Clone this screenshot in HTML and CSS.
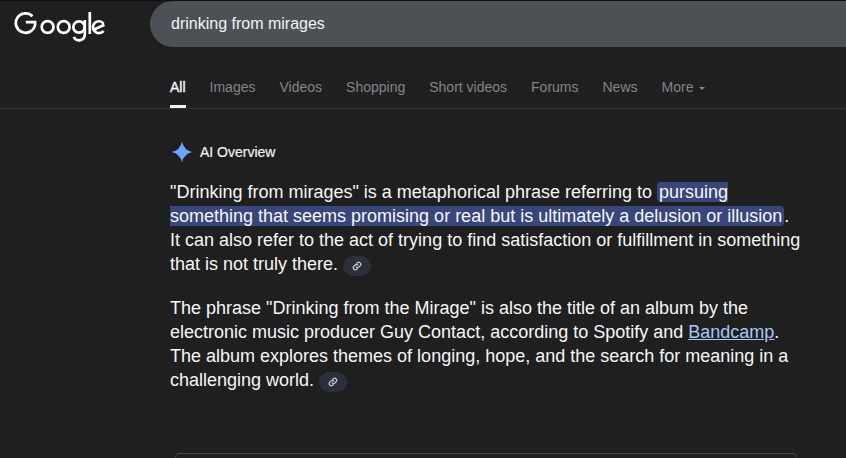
FILE: index.html
```html
<!DOCTYPE html>
<html lang="en">
<head>
<meta charset="utf-8">
<title>drinking from mirages - Google Search</title>
<link rel="stylesheet" href="styles.css">
</head>
<body>
<header class="top">
  <svg class="logo" width="92" height="36" viewBox="0 0 92 36" role="img" aria-label="Google">
    <g fill="none" stroke="#fff" stroke-width="2.7">
      <path d="M18.400 9.200A9.700 9.700 0 1 0 21.100 17.600V15.100H11.800"/>
      <circle cx="33.600" cy="20" r="5.900"/>
      <circle cx="49.700" cy="20" r="5.900"/>
      <circle cx="65" cy="20" r="5.700"/>
      <path d="M70.800 13V27.400A5.800 5.800 0 0 1 59.800 30"/>
      <path d="M75.800 5V27"/>
      <path d="M89.600 16.600A5.900 5.900 0 1 0 89.500 23.800M79.800 22.800L90.400 17.800"/>
    </g>
  </svg>
  <div class="search">drinking from mirages</div>
</header>
<nav class="tabs">
  <a class="tab active">All</a>
  <a class="tab">Images</a>
  <a class="tab">Videos</a>
  <a class="tab">Shopping</a>
  <a class="tab">Short videos</a>
  <a class="tab">Forums</a>
  <a class="tab">News</a>
  <a class="tab">More <span class="caret"></span></a>
</nav>
<main class="content">
  <div class="ai-head">
    <svg class="spark" width="24" height="26" viewBox="0 0 24 26" aria-hidden="true">
      <path fill="#6ba4fb" d="M12 2.500Q13.800 11.300 22.500 13 13.800 14.700 12 23.500 10.200 14.700 1.500 13 10.200 11.300 12 2.500Z"/>
    </svg>
    <span class="ai-title">AI Overview</span>
  </div>
  <p class="para">"Drinking from mirages" is a metaphorical phrase referring to <mark class="hl">pursuing something that seems promising or real but is ultimately a delusion or illusion</mark>. It can also refer to the act of trying to find satisfaction or fulfillment in something that is not truly there. <span class="chip"><svg width="10" height="10" viewBox="0 0 24 24" fill="none" stroke="#c8cace" stroke-width="3" stroke-linecap="round"><path d="M10 14a5 5 0 0 0 7 0l3-3a5 5 0 0 0-7-7l-1.500 1.500"/><path d="M14 10a5 5 0 0 0-7 0l-3 3a5 5 0 0 0 7 7l1.500-1.500"/></svg></span></p>
  <p class="para">The phrase "Drinking from the Mirage" is also the title of an album by the electronic music producer Guy Contact, according to Spotify and <a class="link">Bandcamp</a>. The album explores themes of longing, hope, and the search for meaning in a challenging world. <span class="chip"><svg width="10" height="10" viewBox="0 0 24 24" fill="none" stroke="#c8cace" stroke-width="3" stroke-linecap="round"><path d="M10 14a5 5 0 0 0 7 0l3-3a5 5 0 0 0-7-7l-1.500 1.500"/><path d="M14 10a5 5 0 0 0-7 0l-3 3a5 5 0 0 0 7 7l1.500-1.500"/></svg></span></p>
  <div class="next-box"></div>
</main>
</body>
</html>
```
FILE: styles.css
```css
* { box-sizing: border-box; }
body {
  margin: 0;
  height: 458px;
  overflow: hidden;
  background: #1f1f1f;
  color: #e8eaed;
  font-family: "Liberation Sans", Arial, sans-serif;
  border-top: 1px solid #0a0f1e;
}
.top {
  display: flex;
  align-items: flex-start;
  height: 62px;
  padding-left: 14px;
}
.logo { margin-top: 6px; margin-right: 44px; flex: none; }
.search {
  flex: 1;
  height: 46px;
  padding-left: 21px;
  line-height: 45px;
  font-size: 16px;
  color: #f1f3f4;
  background: #4d5156;
  border-radius: 24px 0 0 24px;
}
.tabs {
  display: flex;
  gap: 24px;
  height: 46px;
  padding-left: 170px;
  border-bottom: 1px solid #313335;
}
.tab {
  height: 45px;
  padding-top: 16px;
  font-size: 14px;
  line-height: 16px;
  color: #80868b;
}
.tab.active {
  color: #f1f3f4;
  -webkit-text-stroke: 0.4px #f1f3f4;
  border-bottom: 3px solid #f1f3f4;
}
.caret {
  display: inline-block;
  margin-left: 2px;
  vertical-align: 2px;
  border: 3px solid transparent;
  border-top: 3px solid #80868b;
  border-bottom: 0;
  width: 0;
  height: 0;
}
.content {
  width: 802px;
  height: 349px;
  padding-left: 170px;
  overflow: hidden;
}
.ai-head {
  display: flex;
  align-items: center;
  gap: 6px;
  height: 24px;
  margin-top: 31px;
  margin-bottom: 16px;
}
.spark { flex: none; }
.ai-title { font-size: 14px; color: #f1f3f4; -webkit-text-stroke: 0.2px #f1f3f4; }
.para {
  margin: 0 0 20px;
  font-size: 18px;
  line-height: 24px;
  color: #f5f6f7;
}
.hl {
  color: #f5f6f7;
  background: #394679;
  border-radius: 4px;
  padding: 0 2px;
}
.link { color: #a8c7fa; text-decoration: underline; }
.chip {
  display: inline-flex;
  align-items: center;
  justify-content: center;
  width: 28px;
  height: 20px;
  vertical-align: -1px;
  border-radius: 10px;
  background: #2c303a;
}
.next-box {
  height: 5px;
  margin: 61px 5px 0;
  border: 1px solid #45454f;
  border-bottom: 0;
  border-radius: 17px 17px 0 0;
}
```
